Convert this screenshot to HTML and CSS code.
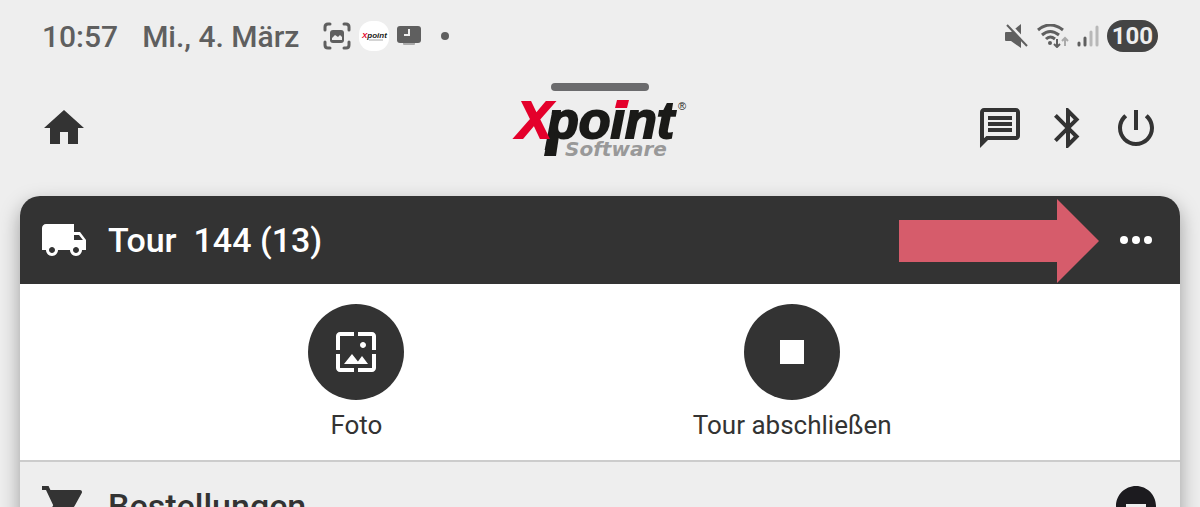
FILE: index.html
```html
<!DOCTYPE html>
<html lang="de">
<head>
  <meta charset="UTF-8">
  <meta name="viewport" content="width=device-width, initial-scale=1">
  <title>Xpoint Tour</title>
  <link rel="stylesheet" href="styles.css">
</head>
<body>

  <div class="statusbar">
    <span class="uhrzeit">10:57</span>
    <span class="datum">Mi., 4. März</span>
    <div class="meldungen">
      <svg width="28" height="28" viewBox="0 0 28 28" fill="none" stroke="#5f5f5f" stroke-width="3" stroke-linecap="round">
        <path d="M2 8V5q0-3 3-3h2M21 2h2q3 0 3 3v3M26 20v3q0 3-3 3h-2M7 26H5q-3 0-3-3v-3"/>
        <rect x="7" y="8" width="14" height="13" rx="3" fill="#5f5f5f" stroke="none"/>
        <path d="M9 18v-2l3-3 3 2 2-2 2 2v3z" fill="#eee" stroke="none"/>
      </svg>
      <svg width="30" height="30" viewBox="0 0 30 30">
        <rect width="30" height="30" rx="13" fill="#fff"/>
        <text class="mini-logo" x="3" y="17"><tspan class="rot">X</tspan>point</text>
        <path d="M10 19h14" stroke="#aaa"/>
      </svg>
      <svg width="24" height="20" viewBox="0 0 24 20">
        <rect x="6" y="16" width="12" height="3" rx="1" fill="#aaa"/>
        <rect width="24" height="17" rx="3" fill="#5f5f5f"/>
        <path d="M12 3v6H7" fill="none" stroke="#eee" stroke-width="2"/>
      </svg>
      <span class="punkt"></span>
    </div>
    <div class="system">
      <svg width="24" height="24" viewBox="0 0 24 24">
        <path d="M1 8h5l10-8v24L6 17H1q-1 0-1-1V9q0-1 1-1z" fill="#5f5f5f"/>
        <path d="M4 0l20 21" stroke="#eee" stroke-width="3"/>
        <path d="M2 1l20 21" stroke="#5f5f5f" stroke-width="2"/>
      </svg>
      <svg width="32" height="24" viewBox="0 0 32 24" fill="none" stroke="#5f5f5f" stroke-width="2">
        <path d="M1 6q12-10 25 0M5 11q8-7 17 0M9 15q4-4 9 0" stroke-width="3"/>
        <circle cx="13" cy="19" r="2" fill="#5f5f5f" stroke="none"/>
        <path d="M20 15v8M17 20l3 3 3-3"/>
        <path d="M28 22v-8M25 17l3-3 3 3" stroke="#aaa"/>
      </svg>
      <svg width="22" height="24" viewBox="0 0 22 24" stroke-width="3" stroke-linecap="round">
        <path d="M2 19v2M8 14v7" stroke="#5f5f5f"/>
        <path d="M14 8v13M20 3v18" stroke="#b8b8b8"/>
      </svg>
      <span class="akku">100</span>
    </div>
  </div>

  <div class="griff"></div>

  <header class="kopf">
    <a class="icon" href="#" aria-label="Startseite">
      <svg viewBox="0 0 24 24"><path d="M10 20v-6h4v6h5v-8h3L12 3 2 12h3v8z"/></svg>
    </a>
    <svg class="logo" width="176" height="60" viewBox="0 0 176 60">
      <text class="logo-name" x="35" y="40">point</text>
      <path d="M36 38h11l-3 20H32z" fill="#1a1a18"/>
      <text class="logo-name rot" x="5" y="40">X</text>
      <path d="M102 0h17l-2 12h-17z" fill="#eee"/>
      <path d="M105 2h12l-2 8h-12z" fill="#e4002b"/>
      <text class="logo-zusatz" x="53" y="58">Software</text>
      <text class="logo-marke" x="166" y="12">®</text>
    </svg>
    <nav class="werkzeuge">
      <button class="icon" aria-label="Nachrichten">
        <svg viewBox="0 0 24 24"><path d="M4 4h16v12H5.170L4 17.170V4m0-2c-1.100 0-1.990.9-1.990 2L2 22l4-4h14c1.100 0 2-.9 2-2V4c0-1.100-.9-2-2-2H4zm2 10h12v2H6v-2zm0-3h12v2H6V9zm0-3h12v2H6V6z"/></svg>
      </button>
      <button class="icon" aria-label="Bluetooth">
        <svg viewBox="0 0 24 24"><path d="M17.710 7.710L12 2h-1v7.590L6.410 5 5 6.410 10.590 12 5 17.590 6.410 19 11 14.410V22h1l5.710-5.710-4.300-4.290 4.300-4.290zM13 5.830l1.880 1.880L13 9.590V5.830zm1.880 10.460L13 18.170v-3.760l1.880 1.880z"/></svg>
      </button>
      <button class="icon" aria-label="Beenden">
        <svg viewBox="0 0 24 24"><path d="M13 3h-2v10h2V3zm4.830 2.170l-1.420 1.420C17.990 7.860 19 9.810 19 12c0 3.870-3.130 7-7 7s-7-3.130-7-7c0-2.190 1.010-4.140 2.580-5.420L6.170 5.170C4.230 6.820 3 9.260 3 12c0 4.970 4.030 9 9 9s9-4.030 9-9c0-2.740-1.230-5.180-3.170-6.830z"/></svg>
      </button>
    </nav>
  </header>

  <main class="karte">
    <div class="zeile tour">
      <span class="icon">
        <svg viewBox="0 0 24 24"><path d="M20 8h-3V4H3c-1.100 0-2 .9-2 2v11h2c0 1.660 1.340 3 3 3s3-1.340 3-3h6c0 1.660 1.340 3 3 3s3-1.340 3-3h2v-5l-3-4zM6 18.500c-.83 0-1.500-.67-1.500-1.500s.67-1.500 1.500-1.500 1.500.67 1.500 1.500-.67 1.500-1.500 1.500zm13.500-9l1.960 2.500H17V9.500h2.500zm-1.500 9c-.83 0-1.500-.67-1.500-1.500s.67-1.500 1.500-1.500 1.500.67 1.500 1.500-.67 1.500-1.500 1.500z"/></svg>
      </span>
      <h1>Tour&nbsp; 144 (13)</h1>
      <button class="icon" aria-label="Mehr">
        <svg viewBox="0 0 24 24"><circle cx="6" cy="12" r="2"/><circle cx="12" cy="12" r="2"/><circle cx="18" cy="12" r="2"/></svg>
      </button>
      <svg class="pfeil" width="200" height="84" viewBox="0 0 200 84">
        <path d="M0 21h158V0l42 42-42 42V63H0z"/>
      </svg>
    </div>

    <div class="aktionen">
      <button class="aktion">
        <span class="kreis">
          <svg viewBox="0 0 24 24"><path d="M4 4h7V2H4c-1.100 0-2 .9-2 2v7h2V4zm6 9l-4 5h12l-3-4-2.030 2.710L10 13zm7-4.500c0-.83-.67-1.500-1.500-1.500S14 7.670 14 8.500s.67 1.500 1.500 1.500S17 9.330 17 8.500zM20 2h-7v2h7v7h2V4c0-1.100-.9-2-2-2zm0 18h-7v2h7c1.100 0 2-.9 2-2v-7h-2v7zM4 13H2v7c0 1.100.9 2 2 2h7v-2H4v-7z"/></svg>
        </span>
        Foto
      </button>
      <button class="aktion">
        <span class="kreis">
          <svg viewBox="0 0 24 24"><path d="M6 6h12v12H6z"/></svg>
        </span>
        Tour abschließen
      </button>
    </div>

    <div class="zeile bestellungen">
      <span class="icon">
        <svg viewBox="0 0 24 24"><path d="M7 18c-1.100 0-1.990.9-1.990 2S5.900 22 7 22s2-.9 2-2-.9-2-2-2zM1 2v2h2l3.600 7.590-1.350 2.450c-.16.28-.25.61-.25.96 0 1.100.9 2 2 2h12v-2H7.420c-.14 0-.25-.11-.25-.25l.03-.12.9-1.630h7.450c.75 0 1.410-.41 1.750-1.030l3.580-6.490c.08-.14.12-.31.12-.48 0-.55-.45-1-1-1H5.210l-.94-2H1zm16 16c-1.100 0-1.990.9-1.990 2s.89 2 1.990 2 2-.9 2-2-.9-2-2-2z"/></svg>
      </span>
      <h2>Bestellungen</h2>
      <button class="icon einklappen" aria-label="Einklappen">
        <svg viewBox="0 0 24 24"><path d="M12 2C6.480 2 2 6.480 2 12s4.480 10 10 10 10-4.480 10-10S17.520 2 12 2zm5 11H7v-2h10v2z"/></svg>
      </button>
    </div>
  </main>

</body>
</html>
```
FILE: styles.css
```css
html {
  scrollbar-width: none;
}

body {
  margin: 0;
  font-family: Roboto, sans-serif;
  background: #eee;
  color: #333;
}

svg {
  display: block;
}

button {
  padding: 0;
  border: none;
  background: none;
  font: inherit;
  color: inherit;
  cursor: pointer;
}

h1, h2 {
  flex: 1;
  margin: 0;
  font-size: 34px;
  font-weight: 500;
}

.icon {
  width: 48px;
  height: 48px;
  color: inherit;
}

.icon svg, .kreis svg {
  width: 48px;
  height: 48px;
  fill: currentColor;
}

/* Statusleiste */
.statusbar {
  display: flex;
  align-items: center;
  height: 72px;
  padding: 0 42px;
  gap: 24px;
  font-size: 30px;
  font-weight: 500;
  color: #5f5f5f;
}

.meldungen, .system {
  display: flex;
  align-items: center;
  gap: 8px;
}

.system {
  margin-left: auto;
}

.punkt {
  width: 8px;
  height: 8px;
  margin-left: 12px;
  border-radius: 50%;
  background: #5f5f5f;
}

.akku {
  padding: 0 5px;
  border-radius: 16px;
  background: #444;
  color: #eee;
  font-size: 24px;
  font-weight: 700;
  line-height: 32px;
}

.griff {
  width: 98px;
  height: 8px;
  margin: 11px auto 0;
  border-radius: 4px;
  background: #6b6b6d;
}

/* Kopfzeile */
.kopf {
  display: grid;
  grid-template-columns: 1fr auto 1fr;
  align-items: center;
  padding: 7px 40px;
}

.werkzeuge {
  display: flex;
  justify-content: flex-end;
  gap: 20px;
}

.logo {
  overflow: visible;
}

.logo-name {
  font: italic bold 52px "Liberation Sans", sans-serif;
  fill: #1a1a18;
  stroke: #1a1a18;
  stroke-width: 2px;
}

.logo-name.rot {
  fill: #e4002b;
  stroke: #e4002b;
}

.logo-zusatz {
  font: italic bold 20px "DejaVu Sans", sans-serif;
  fill: #999;
}

.logo-marke {
  font: 11px "Liberation Sans", sans-serif;
  fill: #1a1a18;
}

.mini-logo {
  font: italic bold 8px "Liberation Sans", sans-serif;
  fill: #1a1a18;
}

.mini-logo .rot {
  fill: #e4002b;
}

/* Karte */
.karte {
  margin: 31px 20px 20px;
  border-radius: 20px;
  background: #fff;
  box-shadow: 0 8px 20px rgba(0, 0, 0, 0.35);
}

.zeile {
  display: flex;
  align-items: center;
  gap: 20px;
  padding: 20px;
}

.tour {
  position: relative;
  border-radius: 20px 20px 0 0;
  background: #333;
  color: #fff;
}

/* Hinweispfeil auf das Menü */
.pfeil {
  position: absolute;
  top: 3px;
  right: 81px;
  fill: #d65c6b;
  pointer-events: none;
}

.aktionen {
  display: flex;
  justify-content: space-evenly;
  padding: 20px 0;
}

.aktion {
  display: flex;
  flex-direction: column;
  align-items: center;
  gap: 10px;
  font-size: 26px;
  line-height: 30px;
}

.kreis {
  display: grid;
  place-items: center;
  width: 96px;
  height: 96px;
  border-radius: 50%;
  background: #333;
  color: #fff;
}

.bestellungen {
  border-top: 2px solid #ccc;
  border-radius: 0 0 20px 20px;
  background: #eee;
}

.einklappen {
  color: #1c1b1f;
}
```
